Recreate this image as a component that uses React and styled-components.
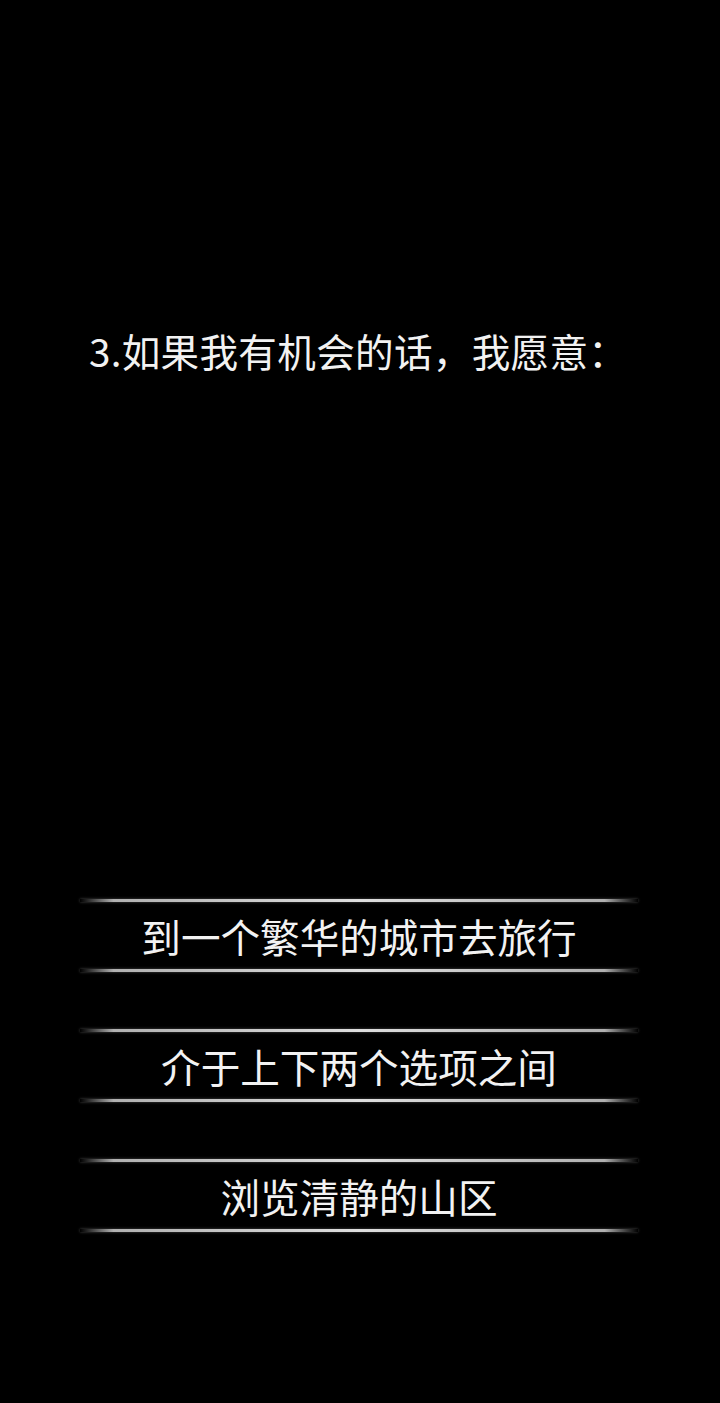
import React from "react";
import styled, { createGlobalStyle } from "styled-components";

const Global = createGlobalStyle`
  html, body { margin: 0; padding: 0; background: #000; }
  #root { width: 720px; }
`;

const Page = styled.div`
  width: 720px;
  height: 1403px;
  background: #000;
  display: flex;
  flex-direction: column;
  font-family: "Noto Sans CJK SC", "Noto Sans", sans-serif;
  color: #f2f2f2;
  box-sizing: border-box;
  padding-top: 325px;
`;

const Title = styled.h1`
  margin: 0;
  padding-left: 89px;
  font-size: 38.6px;
  font-weight: 400;
  line-height: 50px;
  letter-spacing: 0.3px;
`;

const Options = styled.div`
  margin-top: 524px;
  display: flex;
  flex-direction: column;
  gap: 57px;
  padding: 0 82px 0 80px;
`;

const Line = styled.div`
  height: 3px;
  background: linear-gradient(
    to right,
    rgba(200, 200, 200, 0) 0%,
    rgba(195, 195, 195, 0.9) 6%,
    #dedede 50%,
    rgba(195, 195, 195, 0.9) 94%,
    rgba(200, 200, 200, 0) 100%
  );
  box-shadow: 0 0 3px rgba(255, 255, 255, 0.3);
`;

const Option = styled.div`
  height: 73px;
  display: flex;
  flex-direction: column;
  justify-content: space-between;
`;

const Label = styled.div`
  text-align: center;
  font-size: 39.6px;
  line-height: 42px;
  font-weight: 400;
  color: #f2f2f2;
`;

const options = ["到一个繁华的城市去旅行", "介于上下两个选项之间", "浏览清静的山区"];

export default function App() {
  return (
    <Page>
      <Global />
      <Title>3.如果我有机会的话，我愿意：</Title>
      <Options>
        {options.map((o) => (
          <Option key={o}>
            <Line />
            <Label>{o}</Label>
            <Line />
          </Option>
        ))}
      </Options>
    </Page>
  );
}
